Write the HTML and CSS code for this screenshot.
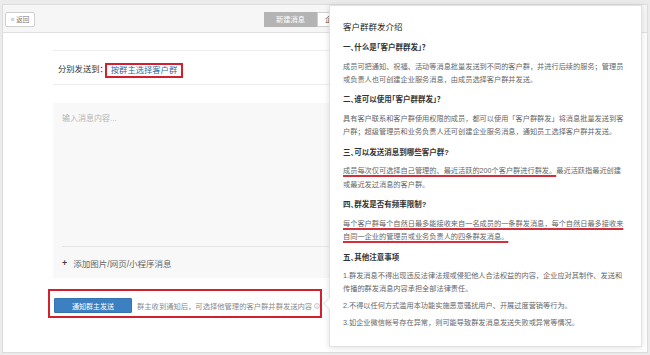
FILE: index.html
```html
<!DOCTYPE html>
<html lang="zh-CN">

<head>
    <meta charset="UTF-8">
    <meta name="viewport" content="width=device-width, initial-scale=1.0">
    <title>客户群群发</title>
    <link rel="stylesheet" href="styles.css">
</head>

<body>
    <div class="panel">
        <div class="topbar">
            <a class="back-btn"><span class="back-arrow">«</span>返回</a>
            <div class="tabs">
                <span class="tab active">新建消息</span>
                <span class="tab">企业群发记录</span>
            </div>
        </div>

        <div class="content">
            <div class="send-row">
                <span class="send-label">分别发送到：</span>
                <span class="send-target">按群主选择客户群</span>
            </div>

            <div class="editor">
                <div class="editor-input">输入消息内容...</div>
                <div class="editor-add"><span class="plus">+</span>添加图片/网页/小程序消息</div>
            </div>

            <div class="submit-row">
                <button class="btn-primary">通知群主发送</button>
                <span class="hint">群主收到通知后，可选择他管理的客户群并群发送内容</span>
                <svg class="info-icon" viewBox="0 0 6 6">
                    <circle cx="3" cy="3" r="2.5" fill="none" stroke="#b0b0b0" stroke-width="0.7" />
                    <line x1="3" y1="2.6" x2="3" y2="4.5" stroke="#b0b0b0" stroke-width="0.7" />
                    <circle cx="3" cy="1.7" r="0.4" fill="#b0b0b0" />
                </svg>
            </div>
        </div>
    </div>

    <!-- intro popover shown beside the info icon -->
    <div class="popover">
        <h3 class="pop-title">客户群群发介绍</h3>

        <section class="pop-sec">
            <h4>一、什么是「客户群群发」？</h4>
            <p>成员可把通知、祝福、活动等消息批量发送到不同的客户群，并进行后续的服务；管理员或负责人也可创建企业服务消息，由成员选择客户群并发送。</p>
        </section>

        <section class="pop-sec">
            <h4>二、谁可以使用「客户群群发」？</h4>
            <p>具有客户联系和客户群使用权限的成员，都可以使用「客户群群发」将消息批量发送到客户群；超级管理员和业务负责人还可创建企业服务消息，通知员工选择客户群并发送。</p>
        </section>

        <section class="pop-sec">
            <h4>三、可以发送消息到哪些客户群?</h4>
            <p><span class="mark">成员每次仅可选择自己管理的、最近活跃的200个客户群进行群发。</span>最近活跃指最近创建或最近发过消息的客户群。</p>
        </section>

        <section class="pop-sec">
            <h4>四、群发是否有频率限制?</h4>
            <p><span class="mark">每个客户群每个自然日最多能接收来自一名成员的一条群发消息，每个自然日最多接收来自同一企业的管理员或业务负责人的四条群发消息。</span></p>
        </section>

        <section class="pop-sec">
            <h4>五、其他注意事项</h4>
            <p>1.群发消息不得出现违反法律法规或侵犯他人合法权益的内容，企业应对其制作、发送和传播的群发消息内容承担全部法律责任。</p>
            <p>2.不得以任何方式滥用本功能实施恶意骚扰用户、开展过度营销等行为。</p>
            <p>3.如企业微信帐号存在异常，则可能导致群发消息发送失败或异常等情况。</p>
        </section>
    </div>
</body>

</html>
```

FILE: styles.css
```css
/* Page */
body {
    margin: 0;
    width: 650px;
    height: 355px;
    overflow: hidden;
    position: relative;
    background: #ebebeb;
    font-family: "Liberation Sans", "Noto Sans CJK SC", sans-serif;
    text-autospace: no-autospace;
}

* {
    box-sizing: border-box;
}

.panel {
    margin: 4px 2px 0;
    height: 349px;
    background: #fff;
    border: 1px solid #dcdcdc;
}

/* Top bar */
.topbar {
    height: 28px;
    display: flex;
    align-items: center;
    padding: 1px 0 0 2px;
    background: #f6f6f6;
    border-bottom: 1px solid #e0e0e0;
}

.back-btn {
    display: flex;
    align-items: center;
    justify-content: center;
    width: 30px;
    height: 15px;
    background: #fff;
    border: 1px solid #cfcfcf;
    border-radius: 2px;
    font-size: 6.5px;
    color: #777;
}

.back-arrow {
    margin-right: 2px;
    color: #999;
}

.tabs {
    display: flex;
    margin-left: 229px;
}

.tab {
    height: 15px;
    line-height: 13px;
    padding: 0 7px;
    font-size: 7.2px;
    color: #555;
    background: #fff;
    border: 1px solid #cfcfcf;
}

.tab.active {
    width: 53px;
    padding: 0;
    text-align: center;
    color: #fff;
    background: #b4b4b4;
    border-color: #b4b4b4;
}

/* Main content */
.content {
    padding: 17px 50px 0 50px;
}

.send-row {
    height: 35px;
    display: flex;
    align-items: flex-start;
    padding: 13px 0 0 5px;
    border-top: 1px solid #ededed;
    border-bottom: 1px solid #ededed;
    font-size: 8.3px;
}

.send-label {
    line-height: 10px;
    color: #333;
}

.send-target {
    line-height: 10px;
    color: #2e68a5;
    padding: 0 4px 1px;
    margin: -1px 0 0 -3px;
    border: 2px solid #d3202e;
}

.editor {
    margin-top: 18px;
    height: 175px;
    display: flex;
    flex-direction: column;
    background: #f8f8f8;
}

.editor-input {
    flex: 1;
    padding: 11px 9px;
    font-size: 8px;
    line-height: 10px;
    color: #b5b5b5;
}

.editor-add {
    height: 32px;
    margin-left: 9px;
    display: flex;
    align-items: center;
    border-top: 1px solid #e6e6e6;
    font-size: 8.5px;
    color: #666;
}

.plus {
    margin-right: 6px;
    font-size: 9px;
    font-weight: bold;
    color: #444;
}

.submit-row {
    width: 274px;
    margin: 11px 0 0 -5px;
    padding: 7px 0 3px 4px;
    display: flex;
    align-items: center;
    border: 2px solid #d3202e;
}

.btn-primary {
    width: 78px;
    height: 15px;
    padding: 0;
    font-family: inherit;
    font-size: 7px;
    color: #fff;
    background: #3c80c2;
    border: 1px solid #3574b3;
    border-radius: 1px;
}

.hint {
    margin-left: 5px;
    font-size: 7.3px;
    color: #8a8a8a;
    white-space: nowrap;
}

.info-icon {
    width: 6px;
    height: 6px;
    margin-left: 1.5px;
}

/* Intro popover */
.popover {
    position: absolute;
    left: 329px;
    top: 5px;
    width: 313px;
    height: 342px;
    padding: 15px 15px 0 13px;
    background: #fff;
    border: 1px solid #e2e2e2;
    box-shadow: 0 1px 6px rgba(0, 0, 0, 0.12);
}

.popover::before {
    content: "";
    position: absolute;
    left: -5px;
    top: 293px;
    width: 8px;
    height: 8px;
    background: #fff;
    border-left: 1px solid #e2e2e2;
    border-bottom: 1px solid #e2e2e2;
    transform: rotate(45deg);
}

.pop-title {
    margin: 0 0 10px;
    font-size: 8.5px;
    line-height: 12px;
    font-weight: normal;
    color: #222;
}

.pop-sec {
    margin-bottom: 9.2px;
}

.pop-sec h4 {
    margin: 0 0 6.6px;
    font-size: 7.5px;
    line-height: 10px;
    color: #333;
    font-feature-settings: "halt";
}

.pop-sec p {
    margin: 0;
    font-size: 7.2px;
    line-height: 13.3px;
    color: #666;
}

.pop-sec p + p {
    margin-top: 3.5px;
}

.mark {
    text-decoration: underline 1.5px #d3303d;
    text-underline-offset: 2px;
}
```
